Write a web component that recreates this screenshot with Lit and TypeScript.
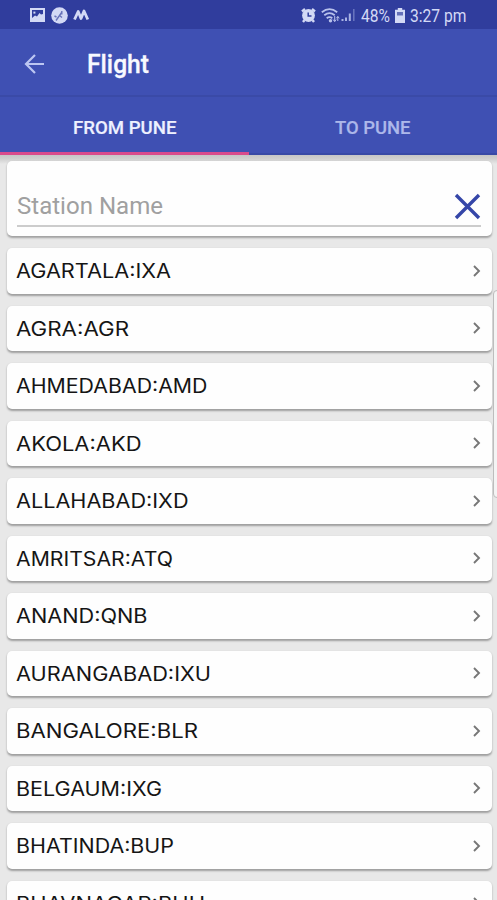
import { LitElement, html, css, svg } from "lit";
import { customElement, property } from "lit/decorators.js";

interface Station {
  label: string;
  width: number;
}

const STATIONS: Station[] = [
  { label: "AGARTALA:IXA", width: 155 },
  { label: "AGRA:AGR", width: 113 },
  { label: "AHMEDABAD:AMD", width: 191.5 },
  { label: "AKOLA:AKD", width: 125.5 },
  { label: "ALLAHABAD:IXD", width: 172.5 },
  { label: "AMRITSAR:ATQ", width: 157 },
  { label: "ANAND:QNB", width: 131.5 },
  { label: "AURANGABAD:IXU", width: 195 },
  { label: "BANGALORE:BLR", width: 182 },
  { label: "BELGAUM:IXG", width: 146 },
  { label: "BHATINDA:BUP", width: 158 },
  { label: "BHAVNAGAR:BHU", width: 189 },
];

/** One line of text fitted to a given width. */
@customElement("fit-text")
export class FitText extends LitElement {
  @property() text = "";
  @property({ type: Number }) width = 100;

  static styles = css`
    :host { display: block; height: 30px; }
    svg { display: block; overflow: visible; height: 30px; }
    text { fill: currentColor; }
  `;

  render() {
    return html`<svg width=${this.width} height="30">
      ${svg`<text x="0" y="22" textLength=${this.width} lengthAdjust="spacingAndGlyphs">${this.text}</text>`}
    </svg>`;
  }
}

@customElement("status-bar")
export class StatusBar extends LitElement {
  static styles = css`
    :host {
      display: flex;
      align-items: center;
      box-sizing: border-box;
      height: 29px;
      padding: 1px 31px 0 30px;
      background: #303d9d;
      color: #d3d9f5;
      font: 17.5px Roboto, sans-serif;
    }
    svg { display: block; flex: none; }
    fit-text { margin-top: -1px; }
    .clock { margin-left: 6px; }
    .brand { margin-left: 5px; }
    .space { flex: 1; }
    .wifi { margin-left: 5px; }
    .percent { margin-left: 6px; }
    .battery { margin: 0 5px 0 5px; }
  `;

  render() {
    return html`
      <svg width="15" height="14" viewBox="0 0 15 14">
        <rect x="1" y="1" width="13" height="12" fill="none" stroke="#d3d9f5" stroke-width="2" />
        <path d="M2 10l3-2.500 2 1 2.500-3.500 1.500 1.500L13 6v6H2z" fill="#d3d9f5" />
        <rect x="3.400" y="3.600" width="2" height="2" fill="#d3d9f5" />
      </svg>
      <svg class="clock" width="17" height="17" viewBox="0 0 17 17">
        <circle cx="8.500" cy="8.500" r="8.300" fill="#d3d9f5" />
        <path d="M5 13.500L11 5M8 8l3 2.500M10.800 4v3.500M3.500 9l2 1" fill="none" stroke="#6873b9" stroke-width="1.400" />
      </svg>
      <svg class="brand" width="17" height="12" viewBox="0 0 17 12">
        <path d="M1.500 10.500L5.200 2.500 8 9.500 11 2l3.800 8.500" fill="none" stroke="#d3d9f5" stroke-width="2.800" stroke-linejoin="round" />
      </svg>
      <span class="space"></span>
      <svg width="15" height="15" viewBox="0 0 15 15">
        <path d="M1 3.500L4 1M14 3.500L11 1M3.500 12l-1.500 2M11.500 12l1.500 2" stroke="#d3d9f5" stroke-width="2.400" />
        <circle cx="7.500" cy="7.500" r="6.400" fill="#d3d9f5" />
        <path d="M7.200 4.500v3.400h3.300" fill="none" stroke="#303d9d" stroke-width="1.500" />
      </svg>
      <svg class="wifi" width="20" height="15" viewBox="0 0 20 15">
        <g fill="none" stroke="#b9c2ec" stroke-width="1.800">
          <path d="M.8 4.200Q8.500-2 16.200 4.200" />
          <path d="M3.300 7.300Q8.500 3 13.700 7.300" />
          <path d="M5.700 10.300Q8.500 8 11.300 10.300" />
        </g>
        <circle cx="9.500" cy="12.800" r="1.700" fill="#b9c2ec" />
        <path d="M13.700 8v5.500M12 11.500l1.700 2 1.500-2M16.800 13V8.500M15.300 10.300l1.500-1.800 1.500 1.800" fill="none" stroke="#b9c2ec" />
      </svg>
      <svg width="14" height="14" viewBox="0 0 14 14">
        <path d="M1.500 13v-2M5 13V9.500M8.800 13V5.500" stroke="#a9b3e4" stroke-width="2" />
        <path d="M12.800 13V1" stroke="#6a76c0" stroke-width="1.500" />
      </svg>
      <fit-text class="percent" text="48%" .width=${29}></fit-text>
      <svg class="battery" width="10" height="15" viewBox="0 0 10 15">
        <path d="M2.800 0h4.400v1.700H10V15H0V1.700h2.800z" fill="#d3d9f5" />
        <path d="M2 4h6v3.500H2z" fill="#6570b8" />
      </svg>
      <fit-text text="3:27 pm" .width=${56.5}></fit-text>
    `;
  }
}

@customElement("station-row")
export class StationRow extends LitElement {
  @property() label = "";
  @property({ type: Number }) width = 100;

  static styles = css`
    :host {
      display: flex;
      align-items: center;
      justify-content: space-between;
      box-sizing: border-box;
      height: 45.5px;
      padding: 0 10px 0 9px;
      border-radius: 5px;
      background: #fefefe;
      box-shadow: 0 1.5px 2px rgba(0, 0, 0, 0.32);
      color: #151515;
      font: 19.5px Inter, "Open Sans", sans-serif;
    }
    fit-text { padding-top: 0.5px; }
    svg { display: block; }
  `;

  render() {
    return html`
      <fit-text .text=${this.label} .width=${this.width}></fit-text>
      <svg width="11" height="14" viewBox="0 0 11 14">
        <path d="M3 2l5 5-5 5" fill="none" stroke="#777" stroke-width="1.900" />
      </svg>
    `;
  }
}

@customElement("app-root")
export class AppRoot extends LitElement {
  static styles = css`
    :host {
      display: block;
      position: relative;
      height: 900px;
      overflow: hidden;
      background: #e8e8e8;
      font-family: Roboto, sans-serif;
    }
    .toolbar {
      display: flex;
      align-items: center;
      box-sizing: border-box;
      height: 68px;
      padding: 3px 0 0 24px;
      background: #3f50b3;
      border-bottom: 2px solid #3a4aa7;
      color: #fff;
      font-size: 25px;
      font-weight: 500;
    }
    .toolbar svg { display: block; margin-right: 42px; }
    .title { display: block; margin-top: 4px; color: #f8f9ff; stroke: #f8f9ff; stroke-width: 0.3px; }
    .tabs {
      display: grid;
      grid-template-columns: 1fr 1fr;
      height: 58px;
      background: #3f50b3;
      font-size: 19px;
      font-weight: 500;
    }
    .tab {
      display: flex;
      justify-content: center;
      box-sizing: border-box;
      padding-top: 14.5px;
      color: #adb8ea;
      stroke: #adb8ea;
      stroke-width: 0.2px;
      border-bottom: 2px solid #3849a6;
    }
    .tab.active { color: #eef1ff; stroke: #eef1ff; border-bottom: 3px solid #d94a8c; }
    .content {
      display: flex;
      flex-direction: column;
      gap: 12px;
      padding: 6px 5px 0 7px;
      background: linear-gradient(#c6c6c6, #d0d0d0 4px, #e8e8e8 9px);
    }
    .search {
      box-sizing: border-box;
      height: 75px;
      padding: 29px 11px 0 10px;
      border-radius: 5px;
      background: #fefefe;
      box-shadow: 0 1.5px 2px rgba(0, 0, 0, 0.3);
    }
    .field {
      display: flex;
      justify-content: space-between;
      align-items: center;
      height: 37px;
      box-sizing: border-box;
      padding-bottom: 2px;
      border-bottom: 2.5px solid #ccc;
      color: #a0a0a0;
      font-size: 24px;
    }
    .field svg { display: block; }
    .edge {
      position: absolute;
      left: 493px;
      top: 290px;
      width: 12px;
      height: 206px;
      border: 1px solid #bdbdbd;
      border-radius: 4px;
      background: #f4f4f4;
    }
  `;

  render() {
    return html`
      <status-bar></status-bar>
      <div class="toolbar">
        <svg width="21" height="20" viewBox="0 0 21 20">
          <path d="M20 10H2.500M11 1L2 10l9 9" fill="none" stroke="#bcc6f2" stroke-width="2.200" />
        </svg>
        <fit-text class="title" text="Flight" .width=${62}></fit-text>
      </div>
      <div class="tabs">
        <div class="tab active"><fit-text text="FROM PUNE" .width=${103.5}></fit-text></div>
        <div class="tab"><fit-text text="TO PUNE" .width=${75.5}></fit-text></div>
      </div>
      <div class="content">
        <div class="search">
          <div class="field">
            <fit-text text="Station Name" .width=${146}></fit-text>
            <svg width="27" height="27" viewBox="0 0 27 27">
              <path d="M2 2l23 23M25 2L2 25" stroke="#3546a8" stroke-width="3.400" />
            </svg>
          </div>
        </div>
        ${STATIONS.map(
          (s) => html`<station-row .label=${s.label} .width=${s.width}></station-row>`
        )}
      </div>
      <div class="edge"></div>
    `;
  }
}
